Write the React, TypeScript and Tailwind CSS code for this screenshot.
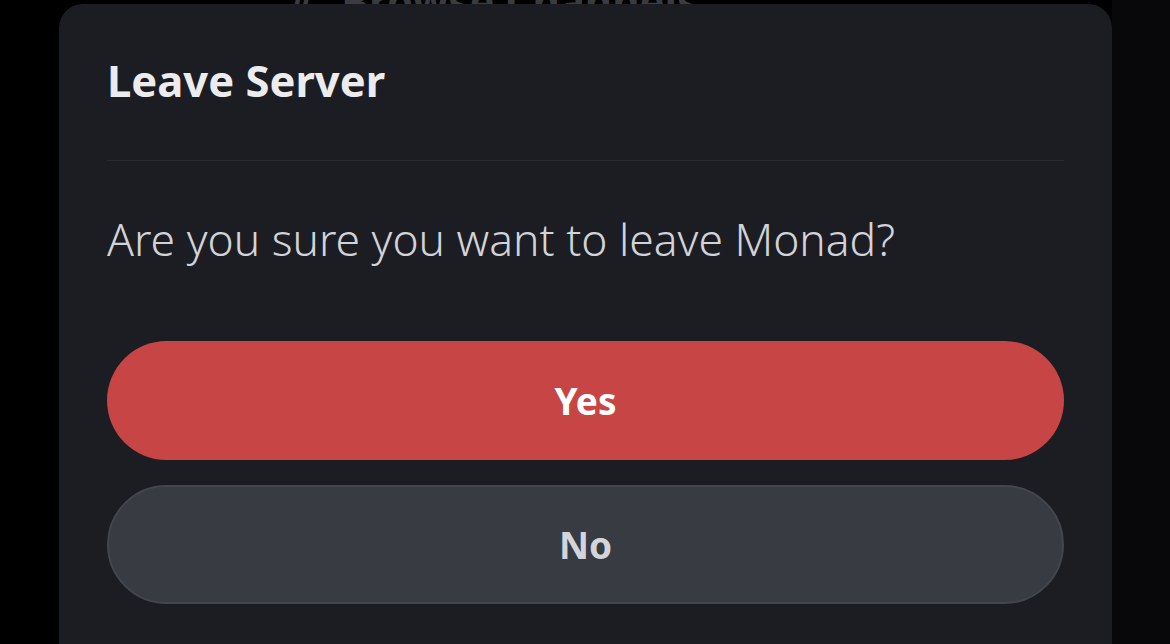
export default function App() {
  return (
    <div className="relative h-[644px] w-[1170px] overflow-hidden bg-[#000000] font-['Noto_Sans',sans-serif]">
      {/* channel list behind the sheet, mostly hidden */}
      <div className="absolute right-0 top-0 h-full w-[58px] bg-[#08080b]" />
      <div className="absolute left-[288px] top-[-31px] flex items-center gap-[26px] text-[42px] font-bold text-[#3b3c41]">
        <span>#</span>
        <span>Browse Channels</span>
      </div>

      {/* Leave server sheet */}
      <div className="relative ml-[59px] mt-[4px] h-[700px] w-[1053px] rounded-[24px] bg-[#1c1d22] px-[48px]">
        <h1 className="pt-[48px] text-[43.5px] font-bold leading-[56px] text-[#ececef]">
          Leave Server
        </h1>
        <div className="mt-[52px] h-px bg-[#2a2b31]" />
        <p className="mt-[50px] text-[44.4px] font-light leading-[56px] text-[#d2d3d8]">
          Are you sure you want to leave Monad?
        </p>

        <div className="mt-[74px] flex flex-col gap-[25px]">
          <button className="flex h-[119px] w-full items-center justify-center rounded-full bg-[#c84545] text-[37px] font-bold text-white">
            Yes
          </button>
          <button className="flex h-[119px] w-full items-center justify-center rounded-full border-2 border-[#44464e] bg-[#393b43] text-[37px] font-bold text-[#d4d5da]">
            No
          </button>
        </div>
      </div>
    </div>
  );
}
